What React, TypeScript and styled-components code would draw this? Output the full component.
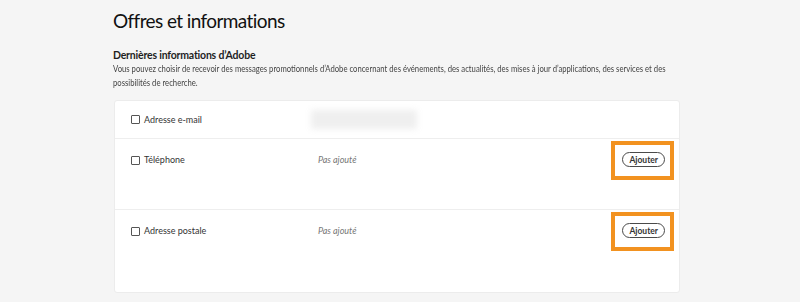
import React from 'react';
import styled, { createGlobalStyle } from 'styled-components';

const GlobalStyle = createGlobalStyle`
    html, body {
        margin: 0;
        padding: 0;
        background: #f5f5f5;
    }
    body {
        font-family: Lato, "Open Sans", sans-serif;
        color: #2c2c2c;
    }
`;

const Page = styled.div`
    width: 800px;
    height: 302px;
    overflow: hidden;
    padding: 0 120px 0 113px;
    box-sizing: border-box;
`;

const Title = styled.h1`
    margin: 0;
    padding-top: 8px;
    font-size: 19px;
    line-height: 26px;
    font-weight: 400;
    letter-spacing: -0.6px;
    color: #111;
`;

// the original face is much narrower than Lato, so the paragraph is squeezed
const Section = styled.section`
    margin-top: 14px;

    h2 {
        margin: 0;
        font-size: 10.5px;
        line-height: 14px;
        font-weight: 700;
        letter-spacing: -0.2px;
        color: #1f1f1f;
    }

    p {
        margin: 0;
        font-size: 9.5px;
        line-height: 14px;
        color: #444;
        width: 690px;
        transform: scaleX(0.81);
        transform-origin: left top;
    }
`;

const Card = styled.div`
    margin: 10px 0 0 1px;
    width: 566px;
    background: #fff;
    border: 1px solid #ececec;
    border-radius: 3px;
    box-sizing: border-box;
`;

const Row = styled.div<{ $height: number; $centered?: boolean }>`
    display: flex;
    align-items: ${ p => p.$centered ? 'center' : 'flex-start' };
    height: ${ p => p.$height }px;
    padding: ${ p => p.$centered ? '0' : '12px' } 16px 0 16px;
    box-sizing: border-box;
    border-bottom: 1px solid #eeeeee;

    &:last-child {
        border-bottom: none;
    }
`;

const Label = styled.label`
    display: flex;
    align-items: center;
    gap: 4px;
    width: 180px;
    font-size: 9px;
    line-height: 18px;
    color: #333;
`;

const Box = styled.span`
    width: 7px;
    height: 7px;
    border: 1px solid #555;
    border-radius: 1px;
    flex-shrink: 0;
`;

const Value = styled.span`
    font-size: 9px;
    line-height: 18px;
    font-style: italic;
    color: #777;
    padding-left: 7px;
`;

const Blurred = styled.span`
    display: block;
    width: 106px;
    height: 19px;
    background: #efefef;
    filter: blur(3px);
`;

const Highlight = styled.div`
    margin: -10px -11px 0 auto;
    padding: 7px 5px 9px 7px;
    border: 4px solid #f29220;
`;

const AddButton = styled.button`
    display: block;
    height: 15px;
    padding: 0 6px;
    border: 1.5px solid #4a4a4a;
    border-radius: 8px;
    background: #fff;
    font-family: Lato, "Open Sans", sans-serif;
    font-size: 8.5px;
    font-weight: 700;
    color: #333;
    cursor: pointer;
`;

const rows = [
    { label: 'Adresse e-mail', height: 38, value: null },
    { label: 'Téléphone', height: 71, value: 'Pas ajouté' },
    { label: 'Adresse postale', height: 82, value: 'Pas ajouté' },
];

const App: React.FC = () => {
    return (
        <Page>
            <GlobalStyle />
            <Title>Offres et informations</Title>
            <Section>
                <h2>Dernières informations d’Adobe</h2>
                <p>Vous pouvez choisir de recevoir des messages promotionnels d’Adobe concernant des événements, des actualités, des mises à jour d’applications, des services et des possibilités de recherche.</p>
            </Section>
            <Card>
                { rows.map( row => (
                    <Row key={ row.label } $height={ row.height } $centered={ !row.value }>
                        <Label>
                            <Box />
                            { row.label }
                        </Label>
                        { row.value
                            ? <Value>{ row.value }</Value>
                            : <Blurred />
                        }
                        { row.value &&
                            <Highlight>
                                <AddButton>Ajouter</AddButton>
                            </Highlight>
                        }
                    </Row>
                ))}
            </Card>
        </Page>
    );
};

export default App;
